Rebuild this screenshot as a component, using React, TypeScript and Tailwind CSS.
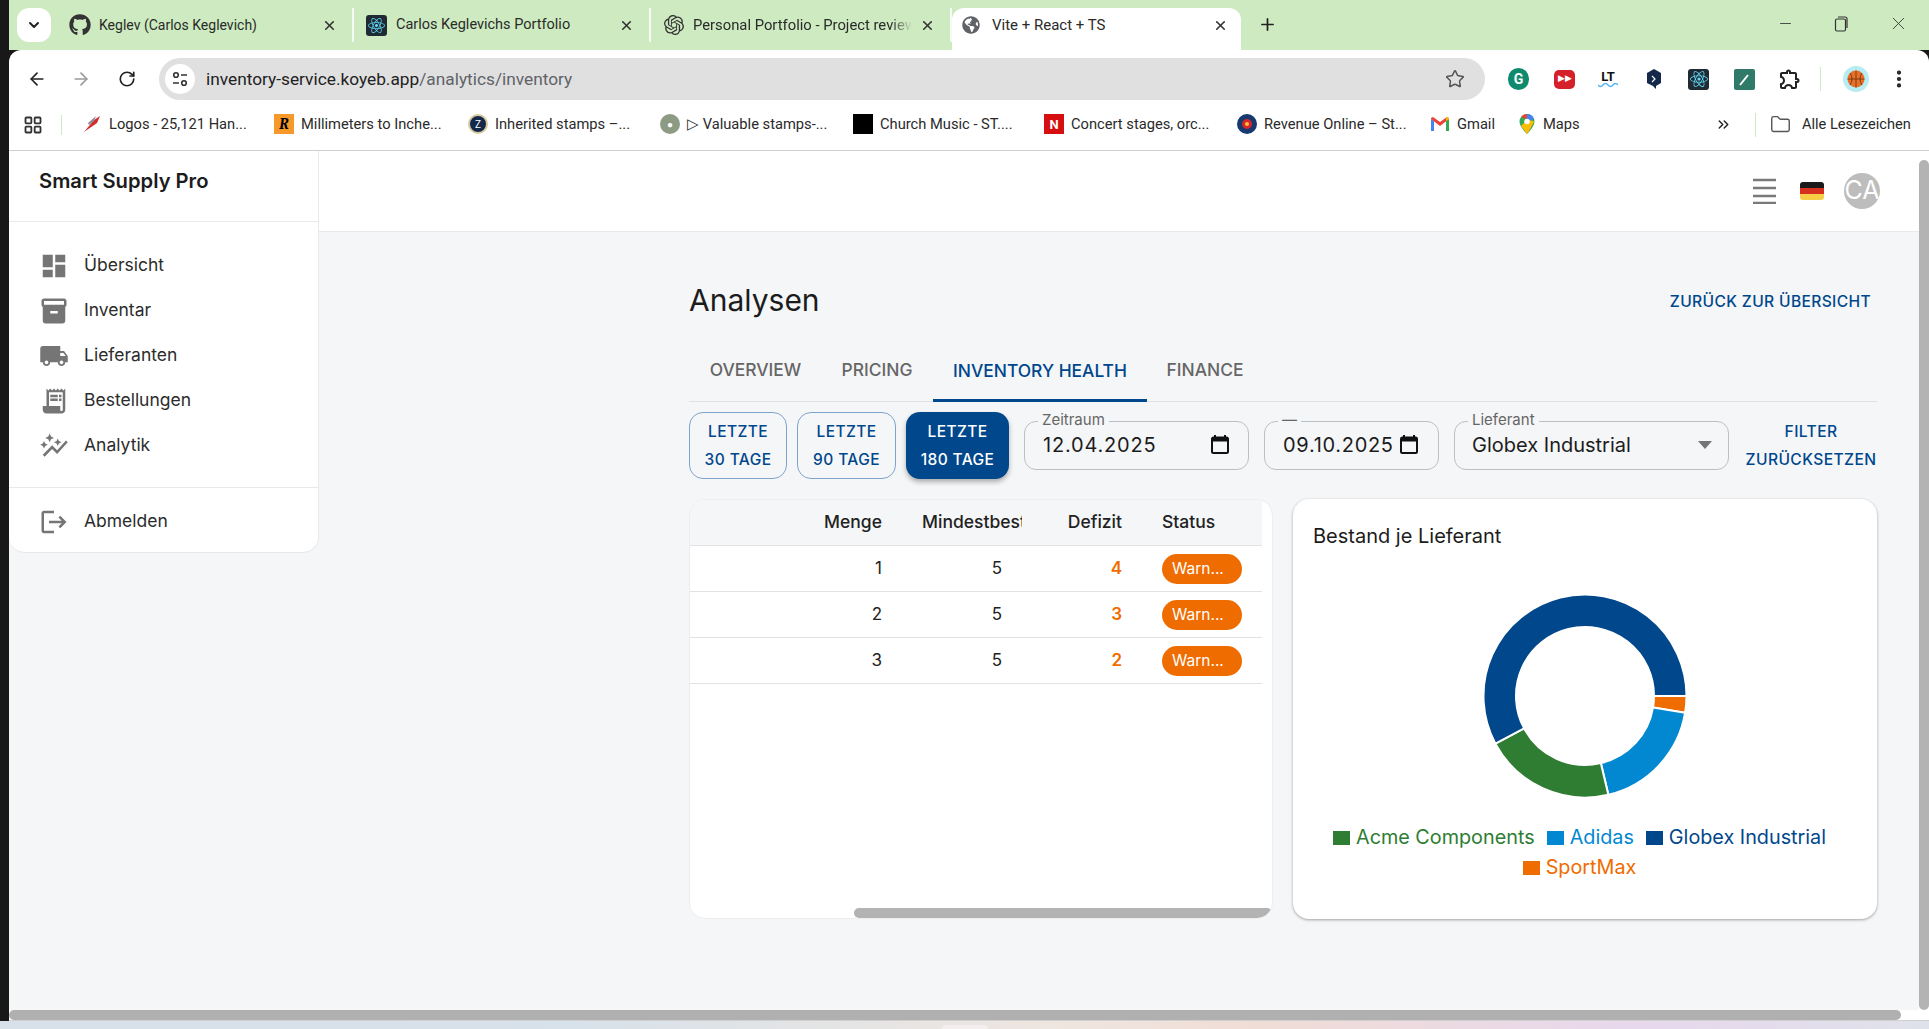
import React from "react";
import { ArrowLeft, ArrowRight, RotateCw, Star, EllipsisVertical, Folder, LayoutGrid, Plus, X, Minus, ChevronDown, ChevronsRight } from "lucide-react";
import { FaGithub, FaReact, FaGlobeAmericas } from "react-icons/fa";
import { SiOpenai } from "react-icons/si";
import { MdDashboard, MdInventory2, MdLocalShipping, MdReceiptLong, MdAutoGraph, MdLogout, MdOutlineExtension } from "react-icons/md";

function arc(a0: number, a1: number, R = 101.5, r = 69, c = 102) {
  const p = (rad: number, deg: number) => {
    const t = (deg * Math.PI) / 180;
    return `${(c + rad * Math.cos(t)).toFixed(2)} ${(c + rad * Math.sin(t)).toFixed(2)}`;
  };
  const large = a1 - a0 > 180 ? 1 : 0;
  return `M${p(R, a0)} A${R} ${R} 0 ${large} 1 ${p(R, a1)} L${p(r, a1)} A${r} ${r} 0 ${large} 0 ${p(r, a0)} Z`;
}

function Tab({ icon, title, w, fade, size }: { icon: React.ReactNode; title: string; w: string; fade?: boolean; size: string }) {
  return (
    <div className={`flex h-[34px] items-center border-r-2 border-white/80 pr-[15px] ${w}`}>
      <div className="flex w-[42px] shrink-0 justify-center pl-[3px]">{icon}</div>
      <span className={`flex-1 overflow-hidden whitespace-nowrap text-[#2a2a2a] ${size} ${fade ? "[mask-image:linear-gradient(to_right,black_90%,transparent)]" : ""}`}>{title}</span>
      <X size={15} strokeWidth={2.6} className="ml-2 shrink-0 text-[#333]" />
    </div>
  );
}

function Bookmark({ icon, label, w }: { icon: React.ReactNode; label: string; w: string }) {
  return (
    <div className={`flex shrink-0 items-center gap-[7px] ${w}`}>
      {icon}
      <span className="whitespace-nowrap text-[14.7px] text-[#2a2a2a]">{label}</span>
    </div>
  );
}

function Nav({ icon, label }: { icon: React.ReactNode; label: string }) {
  return (
    <div className="flex h-[45px] items-center gap-[15px] pl-[30px] text-[17.5px] text-[#2c2c2c]">
      <span className="flex w-[30px] justify-center text-[#757575]">{icon}</span>
      {label}
    </div>
  );
}

function Range({ a, b, on, w }: { a: string; b: string; on?: boolean; w: string }) {
  return (
    <div
      className={`flex h-[67px] flex-col items-center justify-center rounded-[14px] text-[15.5px] leading-[28px] font-medium tracking-[0.4px] ${w} ${
        on ? "bg-[#00478c] text-white shadow-[0_3px_5px_rgba(0,0,0,0.3)]" : "border border-[#7fa3cb] text-[#00478c]"
      }`}
    >
      <span>{a}</span>
      <span>{b}</span>
    </div>
  );
}

function Calendar() {
  return (
    <svg width="18" height="19" viewBox="0 0 18 19" className="shrink-0">
      <path d="M4 0v3M14 0v3" stroke="#111" strokeWidth="2" />
      <rect x="1" y="2.5" width="16" height="15.5" rx="1.5" fill="none" stroke="#111" strokeWidth="2" />
      <rect x="1" y="2.5" width="16" height="4" fill="#111" />
    </svg>
  );
}

function Field({ label, w, children }: { label: string; w: string; children: React.ReactNode }) {
  return (
    <div className={`relative flex h-[49px] items-center rounded-[12px] border border-[#bcbfc3] pb-[2px] pl-[18px] text-[20px] text-[#1c1c1c] ${w}`}>
      <span className="absolute top-[-11px] left-[13px] bg-[#f5f6f8] px-[4px] text-[15px] leading-[18px] text-[#666]">{label}</span>
      {children}
    </div>
  );
}

function Row({ n, d }: { n: string; d: string }) {
  return (
    <div className="grid h-[46px] grid-cols-[208px_140px_100px_125px] items-center border-b border-[#e0e2e5] text-[17px] text-[#222]">
      <div className="pr-4 text-right">{n}</div>
      <div className="pr-[36px] text-right">5</div>
      <div className="pr-4 text-right font-semibold text-[#ef6c00]">{d}</div>
      <div className="pl-6">
        <span className="flex h-[30px] w-[80px] items-center rounded-full bg-[#ef6c00] pl-[10px] text-[15.5px] text-white">Warn...</span>
      </div>
    </div>
  );
}

function Legend({ color, text, label }: { color: string; text: string; label: string }) {
  return (
    <div className={`flex h-[30px] items-center gap-[6px] text-[19.8px] ${text}`}>
      <span className={`h-[14px] w-[17px] ${color}`} />
      {label}
    </div>
  );
}

const Square = ({ className, children }: { className: string; children?: React.ReactNode }) => (
  <span className={`flex h-[20px] w-[20px] shrink-0 items-center justify-center ${className}`}>{children}</span>
);

export default function App() {
  return (
    <div className="flex h-[1029px] w-[1929px] flex-col overflow-hidden bg-[#181818] font-[Inter,sans-serif]">
      <div className="flex h-[1021px]">
        <div className="w-[9px] shrink-0 bg-[#181818]" />
        <div className="flex min-w-0 flex-1 flex-col">
          {/* Tab strip */}
          <div className="flex h-[50px] items-end bg-[#cdeac0] font-[Roboto,sans-serif]">
            <div className="mb-[8px] ml-[8px] flex h-[34px] w-[34px] items-center justify-center rounded-[12px] bg-white">
              <ChevronDown size={16} strokeWidth={3} className="text-[#222]" />
            </div>
            <div className="mb-[8px] ml-[6px] flex">
              <Tab w="w-[297px]" size="text-[14px]" title="Keglev (Carlos Keglevich)" icon={<FaGithub size={22} className="text-[#333]" />} />
              <Tab
                w="w-[297px]"
                size="text-[14.5px]"
                title="Carlos Keglevichs Portfolio"
                icon={
                  <span className="flex h-[21px] w-[21px] items-center justify-center rounded-[3px] bg-[#1f2a33]">
                    <FaReact size={17} className="text-[#61dafb]" />
                  </span>
                }
              />
              <Tab w="w-[301px]" size="text-[14.8px]" fade title="Personal Portfolio - Project review" icon={<SiOpenai size={20} className="text-[#333]" />} />
            </div>
            <div className="flex h-[42px] w-[289px] items-center rounded-t-[12px] bg-white pr-[13px] pb-[8px] pl-[10px]">
              <FaGlobeAmericas size={18} className="text-[#5f6368]" />
              <span className="ml-[12px] flex-1 text-[15px] text-[#2a2a2a]">Vite + React + TS</span>
              <X size={15} strokeWidth={2.6} className="text-[#333]" />
            </div>
            <Plus size={19} strokeWidth={2.2} className="mb-[16px] ml-[17px] text-[#222]" />
            <div className="mb-[16px] ml-auto flex items-center gap-[39px] pr-[20px] text-[#333]">
              <Minus size={17} strokeWidth={1.2} />
              <svg width="16" height="17" viewBox="0 0 16 17" fill="none" stroke="#333" strokeWidth="1.2">
                <rect x="2.5" y="4" width="10" height="12" rx="1.5" />
                <path d="M5 2h7a2 2 0 0 1 2 2v9" />
              </svg>
              <X size={21} strokeWidth={1} />
            </div>
          </div>
          {/* Toolbar */}
          <div className="flex h-[50px] items-center rounded-t-[12px] bg-white pt-[8px] font-[Roboto,sans-serif] text-[#333]">
            <ArrowLeft size={20} strokeWidth={2} className="ml-[18px] text-[#222]" />
            <ArrowRight size={20} strokeWidth={2} className="ml-[24px] text-[#9a9a9a]" />
            <RotateCw size={18} strokeWidth={2.2} className="ml-[27px] text-[#222]" />
            <div className="ml-[23px] flex h-[42px] w-[1326px] items-center rounded-full bg-[#e0e0e0] pr-[20px] pl-[6px]">
              <span className="flex h-[30px] w-[30px] items-center justify-center rounded-full bg-white">
                <svg width="16" height="18" viewBox="0 0 16 18" fill="none" stroke="#333" strokeWidth="1.6">
                  <circle cx="4" cy="5" r="2.300" />
                  <path d="M9 5h6M1 13h6" />
                  <circle cx="12" cy="13" r="2.300" />
                </svg>
              </span>
              <span className="ml-[11px] flex-1 pt-[2px] text-[17.3px] text-[#222]">
                inventory-service.koyeb.app<span className="text-[#5f6368]">/analytics/inventory</span>
              </span>
              <Star size={20} strokeWidth={1.8} className="text-[#555]" />
            </div>
            <div className="ml-[23px] flex items-center">
              <span className="flex h-[22px] w-[21px] items-center justify-center rounded-full bg-[#0f8a6d] text-[14px] font-bold text-white">G</span>
              <span className="ml-[25px] flex h-[19px] w-[21px] items-center justify-center rounded-[5px] bg-[#d5202a] text-[9px] text-white">▶▶</span>
              <span className="ml-[23px] flex w-[20px] flex-col items-center text-[13px] leading-[13px] font-bold text-[#111]">
                LT
                <svg width="20" height="5" viewBox="0 0 20 5"><path d="M0 2q2.500 3 5 0t5 0 5 0 5 0" fill="none" stroke="#54b6f0" strokeWidth="1.4" /></svg>
              </span>
              <svg width="16" height="21" viewBox="0 0 16 21" className="ml-[28px]">
                <path d="M8 0 15 4v10l-5 3v3l-3-3-6-3V4z" fill="#14294a" />
                <path d="M6 7l3 3-3 3" fill="none" stroke="#fff" strokeWidth="1.2" />
              </svg>
              <span className="ml-[26px] flex h-[21px] w-[21px] items-center justify-center rounded-[3px] bg-[#1f2a33]">
                <FaReact size={18} className="text-[#61dafb]" />
              </span>
              <span className="ml-[25px] flex h-[21px] w-[21px] items-center justify-center rounded-[2px] bg-[#2f7a68]">
                <svg width="15" height="15" viewBox="0 0 15 15"><path d="M3 13 11 3" stroke="white" strokeWidth="2" /></svg>
              </span>
              <MdOutlineExtension size={24} className="ml-[23px] text-[#222]" />
              <span className="ml-[18px] h-[24px] w-[1px] bg-[#cdeac0]" />
              <span className="ml-[22px] flex h-[26px] w-[26px] items-center justify-center rounded-full bg-[#b6ecf2]">
                <svg width="18" height="18" viewBox="0 0 18 18">
                  <circle cx="9" cy="9" r="8.500" fill="#e8712a" />
                  <path d="M9 .5v17M.5 9h17M3 3q4 6 0 12M15 3q-4 6 0 12" fill="none" stroke="#7a3410" strokeWidth="0.9" />
                </svg>
              </span>
              <EllipsisVertical size={22} strokeWidth={2.6} className="ml-[19px] text-[#222]" />
            </div>
          </div>
          {/* Bookmarks */}
          <div className="flex h-[51px] items-center border-b border-[#cfcfcf] bg-white pb-[1px] font-[Roboto,sans-serif]">
            <LayoutGrid size={20} strokeWidth={2.2} className="ml-[14px] shrink-0 text-[#333]" />
            <span className="ml-[18px] h-[20px] w-[1px] shrink-0 bg-[#cdeac0]" />
            <div className="ml-[20px] flex">
              <Bookmark
                w="w-[192px]"
                label="Logos - 25,121 Han..."
                icon={
                  <svg width="20" height="20" viewBox="0 0 20 20" className="shrink-0">
                    <path d="M2 18 12 6l6-4-3 7z" fill="#d62b2b" />
                    <path d="M6 9l8-7-2 5-5 4z" fill="#8a8f98" />
                  </svg>
                }
              />
              <Bookmark w="w-[194px]" label="Millimeters to Inche..." icon={<Square className="bg-[#f6982a] font-serif text-[15px] font-bold text-black italic">R</Square>} />
              <Bookmark w="w-[192px]" label="Inherited stamps –..." icon={<Square className="rounded-full border-2 border-[#d8c9a0] bg-[#14294a] text-[10px] text-white">Z</Square>} />
              <Bookmark w="w-[193px]" label="▷ Valuable stamps-..." icon={<Square className="rounded-full bg-[#8d9b84] text-[10px] text-white">●</Square>} />
              <Bookmark w="w-[191px]" label="Church Music - ST...." icon={<Square className="bg-black" />} />
              <Bookmark w="w-[193px]" label="Concert stages, orc..." icon={<Square className="bg-[#d50f0f] text-[13px] font-bold text-white">N</Square>} />
              <Bookmark w="w-[193px]" label="Revenue Online – St..." icon={<Square className="rounded-full bg-[#17396f]"><span className="h-[10px] w-[10px] rounded-full border-[3px] border-[#d6262c] bg-[#f6c533]" /></Square>} />
              <Bookmark
                w="w-[88px]"
                label="Gmail"
                icon={
                  <svg width="20" height="16" viewBox="0 0 20 16" className="shrink-0">
                    <path d="M1 15V3l3 2v10z" fill="#4285f4" />
                    <path d="M19 15V3l-3 2v10z" fill="#34a853" />
                    <path d="M1 3l9 7 9-7v-1l-2-1-7 5-7-5-2 1z" fill="#ea4335" />
                    <path d="M16 5l3-2V2l-2-1-1 1z" fill="#fbbc04" />
                  </svg>
                }
              />
              <Bookmark
                w="w-[197px]"
                label="Maps"
                icon={
                  <svg width="18" height="22" viewBox="0 0 18 22" className="shrink-0">
                    <path d="M9 1a7.500 7.500 0 0 1 7.500 7.500C16.500 14 9 21 9 21S1.500 14 1.500 8.500A7.500 7.500 0 0 1 9 1z" fill="#34a853" />
                    <path d="M3 4a7.500 7.500 0 0 1 6-3v5z" fill="#ea4335" />
                    <path d="M9 1a7.500 7.500 0 0 1 7 5l-7 3z" fill="#4285f4" />
                    <path d="M3 13l6-6 7 1c-1 4-7 13-7 13z" fill="#fbbc04" />
                    <circle cx="9" cy="8.500" r="2.800" fill="white" />
                  </svg>
                }
              />
            </div>
            <ChevronsRight size={17} className="shrink-0 text-[#222]" />
            <span className="ml-[23px] h-[24px] w-[1px] shrink-0 bg-[#cdeac0]" />
            <Folder size={21} strokeWidth={1.6} className="ml-[14px] shrink-0 text-[#555]" />
            <span className="ml-[11px] whitespace-nowrap text-[14.6px] text-[#2a2a2a]">Alle Lesezeichen</span>
          </div>
          {/* Page */}
          <div className="flex h-[859px] bg-[#f5f6f8]">
            <div className="flex h-[402px] w-[310px] shrink-0 flex-col rounded-b-[16px] border-r border-b border-[#e8e9eb] bg-white">
              <div className="flex h-[71px] items-start border-b border-[#e8e9eb] pt-[17px] pl-[30px] text-[20.2px] leading-[26px] font-semibold text-[#1c1c1c]">Smart Supply Pro</div>
              <div className="border-b border-[#e8e9eb] pt-[21px] pb-[19px]">
                <Nav icon={<MdDashboard size={30} />} label="Übersicht" />
                <Nav icon={<MdInventory2 size={30} />} label="Inventar" />
                <Nav icon={<MdLocalShipping size={30} />} label="Lieferanten" />
                <Nav icon={<MdReceiptLong size={30} />} label="Bestellungen" />
                <Nav icon={<MdAutoGraph size={30} />} label="Analytik" />
              </div>
              <div className="pt-[11px]">
                <Nav icon={<MdLogout size={30} />} label="Abmelden" />
              </div>
            </div>
            <div className="flex min-w-0 flex-1 flex-col">
              <div className="flex h-[81px] shrink-0 items-center justify-end border-b border-[#e8e9eb] bg-white pr-[39px]">
                <svg width="23" height="26" viewBox="0 0 23 26">
                  <path d="M0 2h23M0 10h23M0 18h23M0 25h23" stroke="#7a7a7a" strokeWidth="2.400" />
                </svg>
                <span className="ml-[24px] flex h-[18px] w-[24px] flex-col overflow-hidden rounded-[3px]">
                  <span className="flex-1 bg-[#1a1a1a]" />
                  <span className="flex-1 bg-[#d6301f]" />
                  <span className="flex-1 bg-[#f7cf46]" />
                </span>
                <span className="ml-[20px] flex h-[36px] w-[36px] items-center justify-center overflow-hidden rounded-full bg-[#bdbdbd] text-[25px] text-white">CA</span>
              </div>
              <div className="pt-[47px] pr-[42px] pl-[370px]">
                <div className="flex h-[42px] items-center justify-between">
                  <h1 className="text-[30px] leading-[40px] font-normal text-[#1c1c1c]">Analysen</h1>
                  <span className="mt-[3px] mr-[6px] text-[15.6px] font-medium tracking-[0.35px] text-[#00478c]">ZURÜCK ZUR ÜBERSICHT</span>
                </div>
                <div className="mt-[19px] flex h-[62px] border-b border-[#dfe1e4] pl-[1px] text-[17.4px] font-medium text-[#666]">
                  <div className="flex w-[131px] items-center justify-center">OVERVIEW</div>
                  <div className="flex w-[112px] items-center justify-center">PRICING</div>
                  <div className="flex h-[62px] w-[214px] items-center justify-center border-b-[3px] border-[#00478c] pt-[3px] text-[#00478c]">INVENTORY HEALTH</div>
                  <div className="flex w-[116px] items-center justify-center">FINANCE</div>
                </div>
                <div className="mt-[10px] flex h-[67px] items-center">
                  <Range a="LETZTE" b="30 TAGE" w="w-[98px]" />
                  <div className="w-[10px]" />
                  <Range a="LETZTE" b="90 TAGE" w="w-[99px]" />
                  <div className="w-[10px]" />
                  <Range a="LETZTE" b="180 TAGE" on w="w-[103px]" />
                  <div className="w-[15px]" />
                  <div className="flex gap-[15px]">
                    <Field label="Zeitraum" w="w-[225px]">
                      <span className="tracking-[0.8px]">12.04.2025</span>
                      <span className="ml-auto pr-[19px]"><Calendar /></span>
                    </Field>
                    <Field label="—" w="w-[175px]">
                      <span className="tracking-[0.7px]">09.10.2025</span>
                      <span className="ml-auto pr-[20px]"><Calendar /></span>
                    </Field>
                    <Field label="Lieferant" w="w-[275px]">
                      <span className="-ml-[1px]">Globex Industrial</span>
                      <svg width="14" height="8" viewBox="0 0 14 8" className="mr-[16px] ml-auto"><path d="M0 0h14L7 8z" fill="#757575" /></svg>
                    </Field>
                  </div>
                  <div className="ml-[16px] flex w-[132px] shrink-0 flex-col items-center text-[15.6px] leading-[28px] font-medium tracking-[0.4px] text-[#00478c]">
                    <span>FILTER</span>
                    <span>ZURÜCKSETZEN</span>
                  </div>
                </div>
                <div className="mt-[20px] flex gap-[20px]">
                  <div className="flex h-[420px] w-[584px] flex-col overflow-hidden rounded-[16px] border border-[#eceef0] bg-white">
                    <div className="flex-1 pr-[10px]">
                      <div className="grid h-[46px] grid-cols-[208px_140px_100px_125px] items-center border-b border-[#e0e2e5] bg-[#f5f6f8] text-[17.5px] font-medium text-[#222]">
                        <div className="pr-4 text-right">Menge</div>
                        <div className="ml-[24px] w-[100px] overflow-hidden whitespace-nowrap">Mindestbestand</div>
                        <div className="pr-4 text-right">Defizit</div>
                        <div className="pl-6">Status</div>
                      </div>
                      <Row n="1" d="4" />
                      <Row n="2" d="3" />
                      <Row n="3" d="2" />
                    </div>
                    <div className="ml-auto h-[10px] w-[418px] rounded-full bg-[#b3b3b3]" />
                  </div>
                  <div className="flex h-[420px] w-[584px] flex-col items-center rounded-[16px] bg-white px-[21px] pt-[22px] shadow-[0_1px_3px_rgba(0,0,0,0.35)]">
                    <div className="-ml-[2px] w-full text-[20px] leading-[30px] text-[#1c1c1c]">Bestand je Lieferant</div>
                    <svg width="204" height="204" viewBox="0 0 204 204" className="mt-[43px] shrink-0">
                      <path d={arc(0, 9.5)} fill="#ef6c00" stroke="#fff" strokeWidth="2" />
                      <path d={arc(9.5, 76.7)} fill="#0288d1" stroke="#fff" strokeWidth="2" />
                      <path d={arc(76.7, 152)} fill="#2e7d32" stroke="#fff" strokeWidth="2" />
                      <path d={arc(152, 360)} fill="#00478c" stroke="#fff" strokeWidth="2" />
                    </svg>
                    <div className="mt-[25px] flex flex-wrap justify-center gap-x-[12px] pr-[11px]">
                      <Legend color="bg-[#2e7d32]" text="text-[#2e7d32]" label="Acme Components" />
                      <Legend color="bg-[#0288d1]" text="text-[#0288d1]" label="Adidas" />
                      <Legend color="bg-[#00478c]" text="text-[#00478c]" label="Globex Industrial" />
                      <Legend color="bg-[#ef6c00]" text="text-[#ef6c00]" label="SportMax" />
                    </div>
                  </div>
                </div>
              </div>
            </div>
            <div className="w-[10px] shrink-0 bg-white pt-[9px]">
              <div className="h-full rounded-full bg-[#b3b3b3]" />
            </div>
          </div>
          <div className="h-[10px] shrink-0 bg-white">
            <div className="h-full w-[1892px] rounded-full bg-[#b0b0b0]" />
          </div>
          <div className="h-[1px] shrink-0 bg-[#d0d0d0]" />
        </div>
      </div>
      <div className="flex h-[8px] justify-center bg-[linear-gradient(to_right,#d8e0ea,#d8e2ea_30%,#efe6e0_55%,#f0ddd6_65%,#e8d8ee_85%,#dfe2ea)]">
        <div className="h-[4px] w-[46px] self-end rounded-t-[4px] bg-[#f5eeee]" />
      </div>
    </div>
  );
}
